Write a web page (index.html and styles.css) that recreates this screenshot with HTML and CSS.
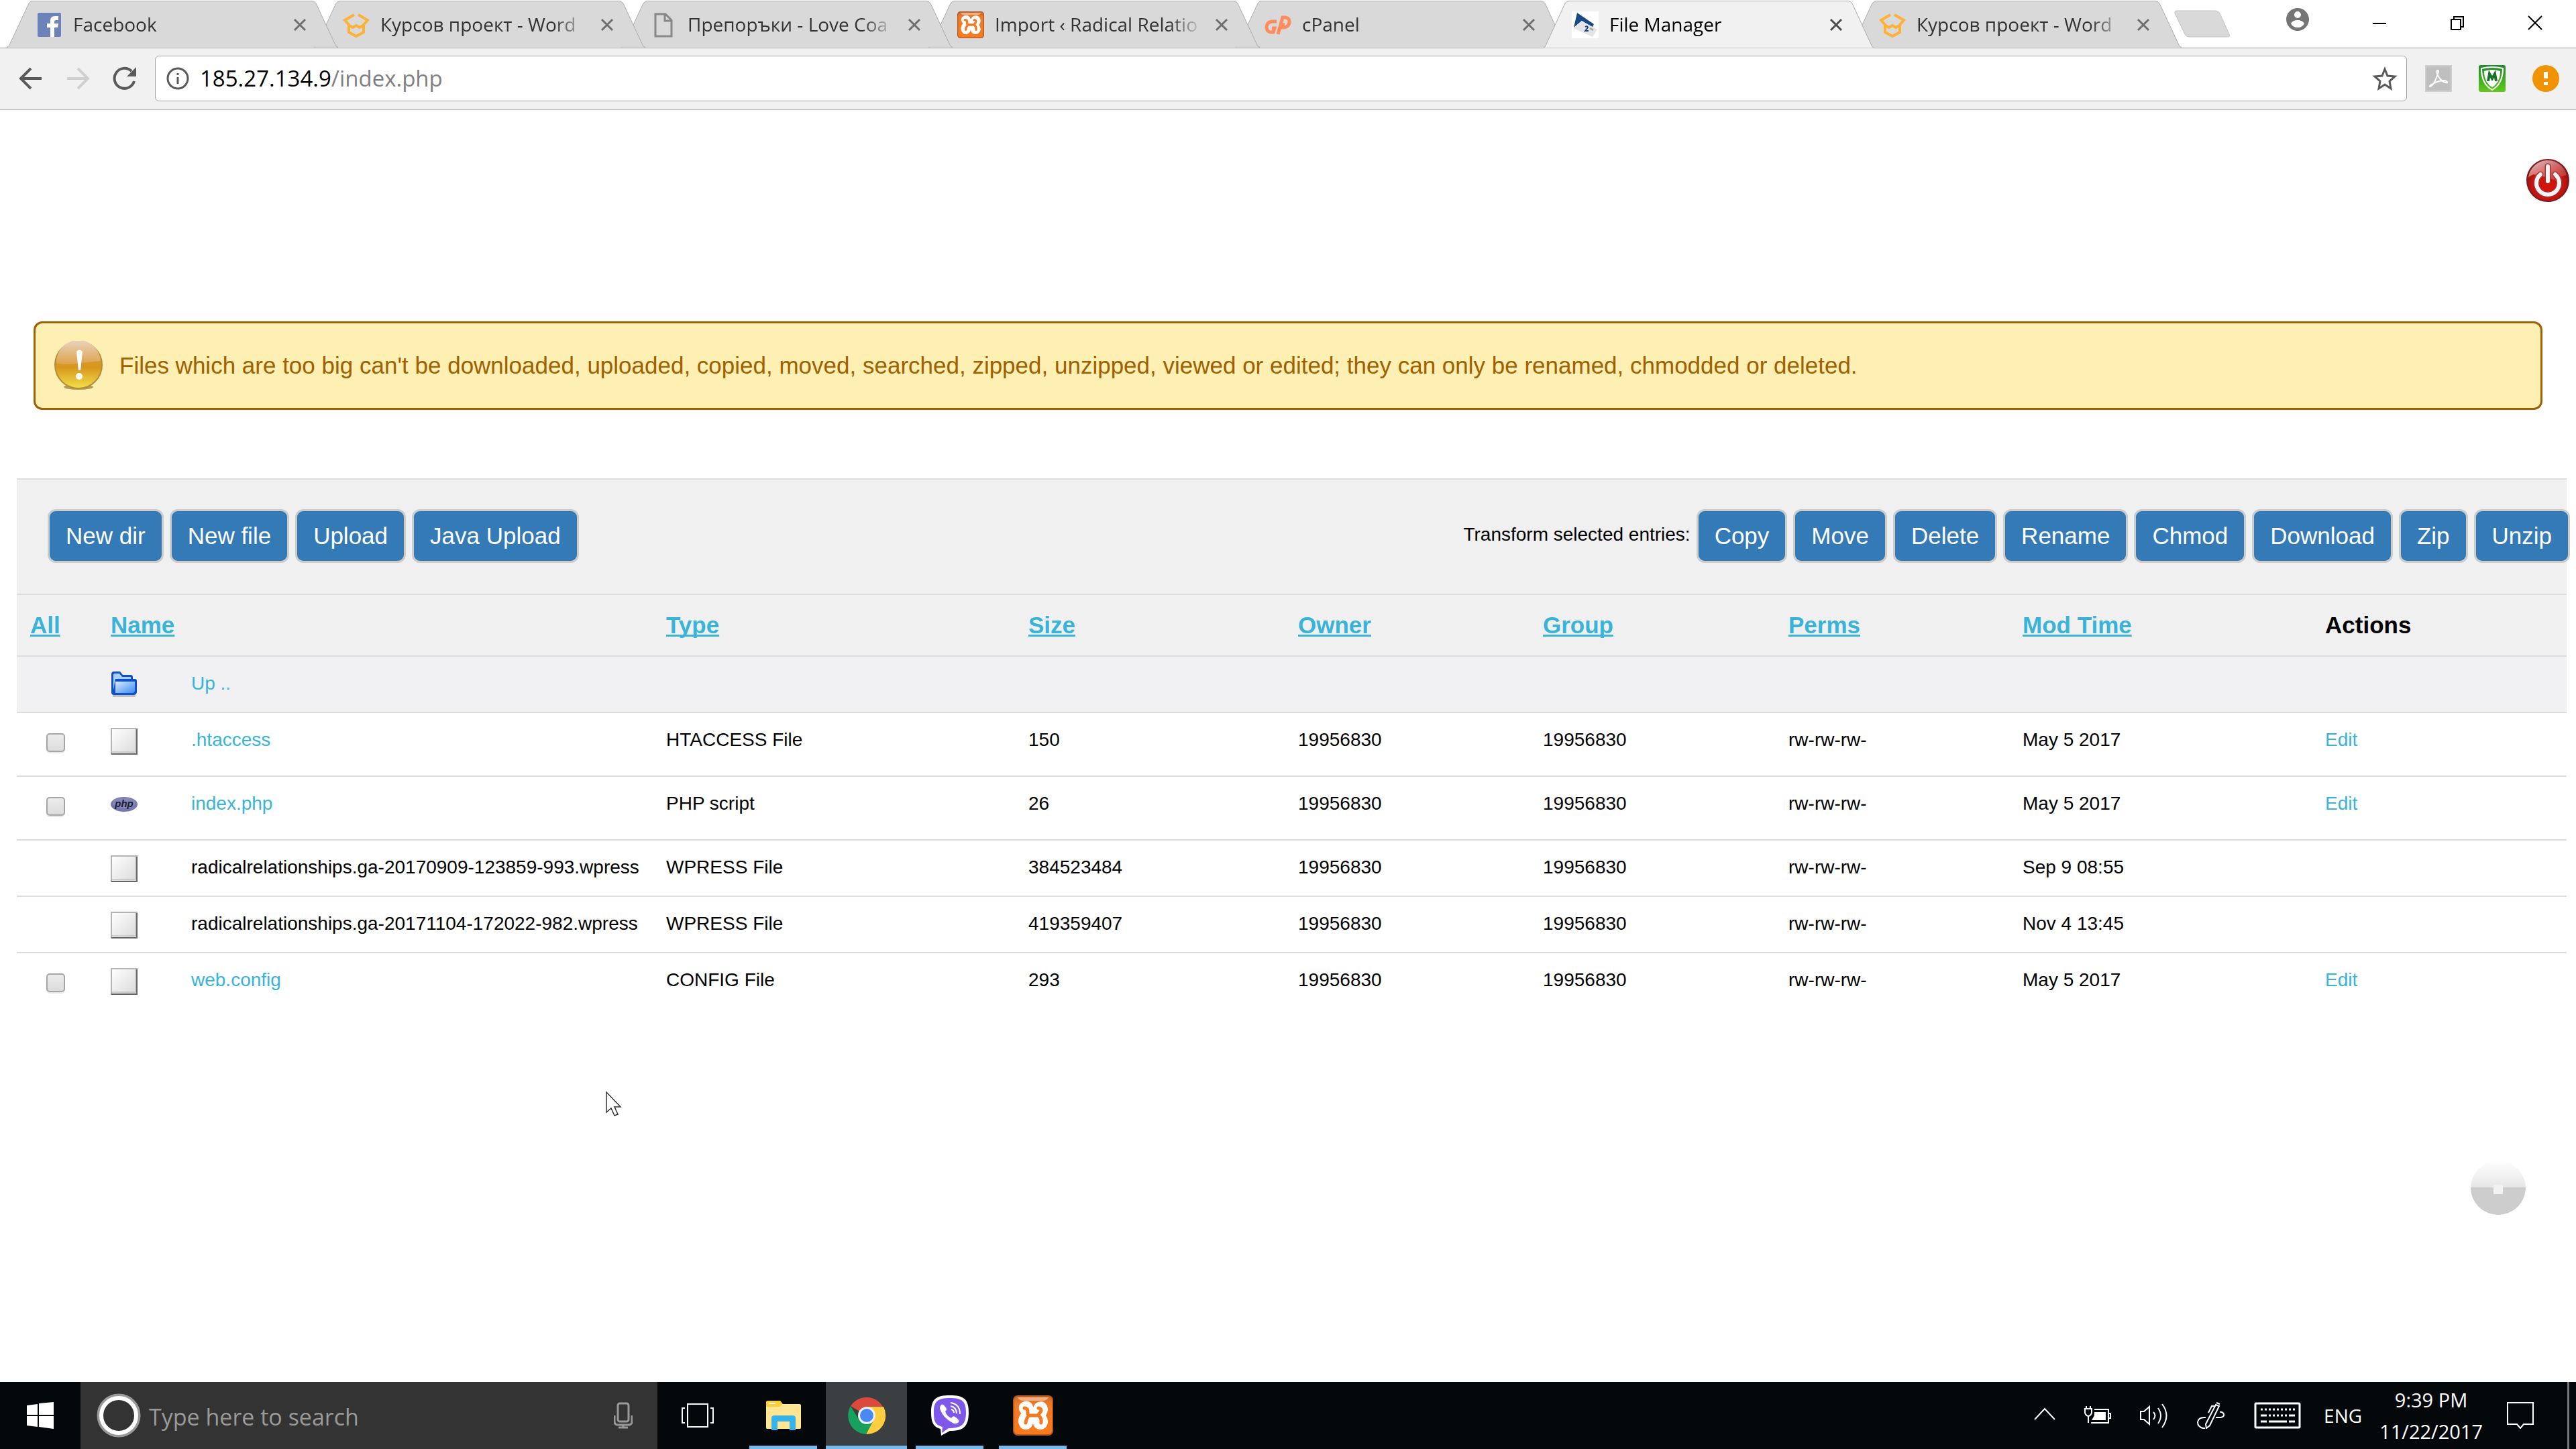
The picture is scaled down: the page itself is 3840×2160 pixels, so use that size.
FILE: index.html
```html
<!DOCTYPE html>
<html lang="en">
<head>
<meta charset="utf-8">
<title>File Manager</title>
<link rel="stylesheet" href="styles.css">
</head>
<body>
<svg class="defs" aria-hidden="true">
  <defs>
    <linearGradient id="paper" x1="0" y1="0" x2="1" y2="1"><stop offset="0" stop-color="#ffffff"/><stop offset="1" stop-color="#dadada"/></linearGradient>
    <linearGradient id="orange" x1="0" y1="0" x2="0" y2="1"><stop offset="0" stop-color="#c9682c"/><stop offset=".2" stop-color="#f07a26"/><stop offset="1" stop-color="#f97a1d"/></linearGradient>
    <linearGradient id="folderBlue" x1="0" y1="0" x2="1" y2="1"><stop offset="0" stop-color="#d5ebff"/><stop offset="1" stop-color="#3f8cf5"/></linearGradient>
    <linearGradient id="gold" x1="0" y1="0" x2="0" y2="1"><stop offset="0" stop-color="#d9a441"/><stop offset=".55" stop-color="#d7961f"/><stop offset="1" stop-color="#f3e04a"/></linearGradient>
    <linearGradient id="goldGloss" x1="0" y1="0" x2="0" y2="1"><stop offset="0" stop-color="#e9d3bd"/><stop offset="1" stop-color="#dea34c"/></linearGradient>
    <linearGradient id="green" x1="0" y1="0" x2="0" y2="1"><stop offset="0" stop-color="#1f8a2c"/><stop offset="1" stop-color="#62c81c"/></linearGradient>
    <radialGradient id="red" cx=".5" cy=".6" r=".55"><stop offset="0" stop-color="#d81408"/><stop offset=".7" stop-color="#c4140e"/><stop offset="1" stop-color="#8d1014"/></radialGradient>
    <linearGradient id="redGloss" x1="0" y1="0" x2="1" y2="1"><stop offset="0" stop-color="#ffffff"/><stop offset="1" stop-color="#d85050" stop-opacity=".5"/></linearGradient>
    <linearGradient id="ghostTop" x1="0" y1="0" x2="0" y2="1"><stop offset="0" stop-color="#ffffff"/><stop offset="1" stop-color="#e6e6e6"/></linearGradient>
  </defs>
  <symbol id="tab-shape" viewBox="0 0 494 72" preserveAspectRatio="none">
    <path d="M0 71.500Q3 71 4 68L33 5Q35 1.500 39 1.500H455Q459 1.500 461 5L490 68Q491 71 494 71.500"/>
  </symbol>
  <symbol id="cross" viewBox="0 0 20 20"><path d="M2 2L18 18M18 2L2 18" fill="none" stroke="currentColor" stroke-width="3"/></symbol>
  <symbol id="book" viewBox="0 0 40 40">
    <g fill="none" stroke="#fdb136" stroke-width="4"><path d="M17 5L3 13L9 20V31L20 37L31 31V20L37 13L23 5"/><path d="M8 20L15 24L20 21L25 24L32 20"/></g>
  </symbol>
  <symbol id="xampp" viewBox="0 0 60 60">
    <rect x="1" y="1" width="58" height="58" rx="6" fill="url(#orange)" stroke="#b45a20" stroke-width="2"/>
    <path d="M7 3H53Q51 8 44 8H16Q9 8 7 3Z" fill="#f3b083"/>
    <g fill="none" stroke-linecap="round" stroke-linejoin="round">
      <path d="M18 23Q13 19 17 16Q22 13 24 19V29H36V22Q37 15 43 16Q48 20 43 27Q40 30 43 33Q48 40 43 44Q36 46 36 38V30H24V38Q23 46 17 44Q12 38 18 30" stroke="#fff" stroke-width="13"/>
      <path d="M17 19Q22 19 22 24V28M38 19Q44 20 41 25L37 30H25Q20 32 19 41M38 30Q43 34 42 41" stroke="#f6791f" stroke-width="5"/>
    </g>
  </symbol>
  <symbol id="file" viewBox="0 0 40 40">
    <rect x="1" y="1" width="38" height="38" fill="url(#paper)" stroke="#b4b4b4" stroke-width="2"/>
    <path d="M39 2V39H1" fill="none" stroke="#666" stroke-width="2"/>
    <path d="M2 36H37V2" fill="none" stroke="#b0b0b0" stroke-width="1"/>
  </symbol>
</svg>

<header class="browser">
  <nav class="tabstrip" aria-label="Tabs">
    <div class="tab">
      <svg class="tab-bg"><use href="#tab-shape"/></svg>
      <svg class="fav" viewBox="0 0 40 40"><rect x="3" y="2" width="35" height="36" rx="2" fill="#6c82b9"/><path d="M22 38V24H17V18H22V14Q22 7 29 7H34V13H31Q28 13 28 16V18H34L33 24H28V38Z" fill="#fff"/></svg>
      <a class="tab-title" href="#">Facebook</a>
      <button class="tab-close" aria-label="Close"><svg><use href="#cross"/></svg></button>
    </div>
    <div class="tab">
      <svg class="tab-bg"><use href="#tab-shape"/></svg>
      <svg class="fav"><use href="#book"/></svg>
      <a class="tab-title" href="#">Курсов проект - Word</a>
      <button class="tab-close" aria-label="Close"><svg><use href="#cross"/></svg></button>
    </div>
    <div class="tab">
      <svg class="tab-bg"><use href="#tab-shape"/></svg>
      <svg class="fav" viewBox="0 0 40 40"><path d="M8 4H23L32 13V37H8ZM22 4V14H32" fill="none" stroke="#888" stroke-width="3"/></svg>
      <a class="tab-title" href="#">Препоръки - Love Coa</a>
      <button class="tab-close" aria-label="Close"><svg><use href="#cross"/></svg></button>
    </div>
    <div class="tab">
      <svg class="tab-bg"><use href="#tab-shape"/></svg>
      <svg class="fav"><use href="#xampp"/></svg>
      <a class="tab-title" href="#">Import ‹ Radical Relatio</a>
      <button class="tab-close" aria-label="Close"><svg><use href="#cross"/></svg></button>
    </div>
    <div class="tab">
      <svg class="tab-bg"><use href="#tab-shape"/></svg>
      <svg class="fav" viewBox="0 0 40 40"><path d="M18 15H11Q4 16 3 23Q3 30 9 31H13L15 25H11M20 34L27 9H31Q38 10 37 17Q35 24 28 24H26L28 17" fill="none" stroke="#ff8c5a" stroke-width="5"/></svg>
      <a class="tab-title" href="#">cPanel</a>
      <button class="tab-close" aria-label="Close"><svg><use href="#cross"/></svg></button>
    </div>
    <div class="tab tab-active">
      <svg class="tab-bg"><use href="#tab-shape"/></svg>
      <svg class="fav" viewBox="0 0 40 40"><path d="M0 0H40V40H0Z" fill="#fff"/><path d="M8 2L33 19L30 25L15 14L3 24Z" fill="#174a86"/><path d="M15 14L38 27L31 38L2 25Z" fill="#e3e5e8"/><path d="M20 23Q23 21 24 24L20 29H25" fill="none" stroke="#23477a" stroke-width="2"/><path d="M27 25L32 28" stroke="#aaa" stroke-width="3"/></svg>
      <a class="tab-title" href="#">File Manager</a>
      <button class="tab-close" aria-label="Close"><svg><use href="#cross"/></svg></button>
    </div>
    <div class="tab">
      <svg class="tab-bg"><use href="#tab-shape"/></svg>
      <svg class="fav"><use href="#book"/></svg>
      <a class="tab-title" href="#">Курсов проект - Word</a>
      <button class="tab-close" aria-label="Close"><svg><use href="#cross"/></svg></button>
    </div>
    <button class="new-tab" aria-label="New tab"><svg viewBox="0 0 84 42"><path d="M3 1H62Q66 1 68 5L82 36Q84 40 80 40H22Q18 40 16 36L1 5Q0 1 3 1Z" fill="#d9d9d9" stroke="#c4c4c4"/></svg></button>
    <div class="window-controls">
      <button class="avatar" aria-label="Profile"><svg viewBox="0 0 34 34"><circle cx="17" cy="17" r="17" fill="#757575"/><circle cx="17" cy="10" r="5" fill="#fff"/><path d="M7 23Q10 18 17 18T27 23Q24 29 17 29T7 23Z" fill="#fff"/></svg></button>
      <button aria-label="Minimize"><svg viewBox="0 0 22 22"><path d="M1 12H21" stroke="#000" stroke-width="2"/></svg></button>
      <button aria-label="Restore"><svg viewBox="0 0 22 22"><path d="M2 6H16V21H2ZM6 6V2H20V17H16" fill="none" stroke="#000" stroke-width="2"/></svg></button>
      <button aria-label="Close window"><svg viewBox="0 0 22 22"><path d="M1 1L21 21M21 1L1 21" stroke="#000" stroke-width="2"/></svg></button>
    </div>
  </nav>
  <div class="toolbar">
    <button aria-label="Back"><svg viewBox="0 0 36 36"><path d="M34 18H4M18 3L3 18L18 33" fill="none" stroke="#5a5a5a" stroke-width="4"/></svg></button>
    <button aria-label="Forward"><svg viewBox="0 0 36 36"><path d="M2 18H32M18 3L33 18L18 33" fill="none" stroke="#d0d0d0" stroke-width="4"/></svg></button>
    <button aria-label="Reload"><svg viewBox="0 0 36 36"><path d="M32 22A15 15 0 1 1 28 7" fill="none" stroke="#5a5a5a" stroke-width="4"/><path d="M35 1V15H21Z" fill="#5a5a5a"/></svg></button>
    <div class="omnibox">
      <svg class="info" viewBox="0 0 34 34"><circle cx="17" cy="17" r="15" fill="none" stroke="#5a5a5a" stroke-width="3"/><path d="M17 15V25M17 9V12" stroke="#5a5a5a" stroke-width="3"/></svg>
      <div class="url" role="textbox" aria-label="Address">185.27.134.9<span>/index.php</span></div>
      <button class="star" aria-label="Bookmark"><svg viewBox="0 0 38 36"><path d="M19 4L23 14L34 15L26 22L28 33L19 27L10 33L12 22L4 15L15 14Z" fill="none" stroke="#5a5a5a" stroke-width="3"/></svg></button>
    </div>
    <div class="extensions">
      <button aria-label="Acrobat"><svg viewBox="0 0 40 40"><rect x="1" y="1" width="38" height="38" fill="#bfbfbf" stroke="#d0d0d0" stroke-width="2"/><path d="M7 32Q13 32 20 10Q20 7 18 8Q16 12 22 20Q28 27 33 26Q33 23 27 23Q17 24 10 29Q6 31 7 32Z" fill="none" stroke="#fff" stroke-width="2"/></svg></button>
      <button aria-label="WebAdvisor"><svg viewBox="0 0 40 40"><rect width="40" height="40" rx="3" fill="url(#green)"/><path d="M4 5Q20 1 36 5Q36 28 20 37Q4 28 4 5Z" fill="none" stroke="#fff" stroke-width="2"/><path d="M8 9Q20 5 32 9Q32 26 20 33Q8 26 8 9Z" fill="#fff"/><path d="M14 24L16 13L20 20L24 13L26 24" fill="none" stroke="#18722a" stroke-width="4"/></svg></button>
      <button aria-label="Update available"><svg viewBox="0 0 40 40"><circle cx="20" cy="20" r="20" fill="#f09300"/><path d="M20 10V20M20 25V30" stroke="#fff" stroke-width="6"/></svg></button>
    </div>
  </div>
</header>

<main class="page">
  <div class="session">
    <button class="logout" aria-label="Log out"><svg viewBox="0 0 66 66"><circle cx="33" cy="33" r="31" fill="url(#red)" stroke="#7c1a20" stroke-width="2"/><path d="M4 29A29 29 0 0 1 61 25Q50 27 42 32Q24 26 12 24Q6 26 4 29Z" fill="url(#redGloss)" opacity=".8"/><path d="M22 24A17 17 0 1 0 44 24" fill="none" stroke="#a83238" stroke-width="9" stroke-linecap="round"/><path d="M33 12V34" stroke="#a83238" stroke-width="9" stroke-linecap="round"/><path d="M22 24A17 17 0 1 0 44 24M33 12V34" fill="none" stroke="#f4f4f4" stroke-width="6" stroke-linecap="round"/></svg></button>
  </div>

  <div class="notice" role="alert">
    <svg class="notice-icon" viewBox="0 0 74 74"><ellipse cx="37" cy="69" rx="22" ry="4" fill="#b29b52"/><circle cx="37" cy="36" r="35" fill="url(#gold)" stroke="#b08d3c" stroke-width="2"/><path d="M4 34A33 33 0 0 1 70 30Q50 32 37 34T4 34Z" fill="url(#goldGloss)"/><path d="M34 16Q38 11 43 16L40 44H37Z" fill="#fff"/><circle cx="38" cy="53" r="5" fill="#fff"/></svg>
    <p>Files which are too big can't be downloaded, uploaded, copied, moved, searched, zipped, unzipped, viewed or edited; they can only be renamed, chmodded or deleted.</p>
  </div>

  <form class="files">
    <div class="actions">
      <div class="group">
        <button type="button" class="btn">New dir</button>
        <button type="button" class="btn">New file</button>
        <button type="button" class="btn">Upload</button>
        <button type="button" class="btn">Java Upload</button>
      </div>
      <div class="group group-transform">
        <span class="group-label">Transform selected entries:</span>
        <button type="button" class="btn">Copy</button>
        <button type="button" class="btn">Move</button>
        <button type="button" class="btn">Delete</button>
        <button type="button" class="btn">Rename</button>
        <button type="button" class="btn">Chmod</button>
        <button type="button" class="btn">Download</button>
        <button type="button" class="btn">Zip</button>
        <button type="button" class="btn">Unzip</button>
      </div>
    </div>
    <table class="listing">
      <colgroup><col class="c-check"><col class="c-icon"><col class="c-name"><col class="c-type"><col class="c-size"><col class="c-owner"><col class="c-group"><col class="c-perms"><col class="c-time"><col></colgroup>
      <thead>
        <tr><th><a href="#">All</a></th><th colspan="2"><a href="#">Name</a></th><th><a href="#">Type</a></th><th><a href="#">Size</a></th><th><a href="#">Owner</a></th><th><a href="#">Group</a></th><th><a href="#">Perms</a></th><th><a href="#">Mod Time</a></th><th>Actions</th></tr>
      </thead>
      <tbody>
        <tr class="up"><td></td><td><svg class="ficon" viewBox="0 0 40 40"><path d="M3 34H37V38H3Z" fill="#777" opacity=".4"/><path d="M1 4Q1 0 5 0H14L18 5H30Q33 5 33 9V11H36Q39 11 39 14V31Q38 35 34 35H5Q1 35 1 31Z" fill="#0f4fc8"/><path d="M4 5Q4 3 6 3H13L17 8H30V11H7L4 28Z" fill="#a9d2ff"/><path d="M7 15H36V28Q36 32 33 32H7Z" fill="url(#folderBlue)"/></svg></td><td><a href="#">Up ..</a></td><td></td><td></td><td></td><td></td><td></td><td></td><td></td></tr>
        <tr class="selectable"><td><input type="checkbox" aria-label="Select .htaccess"></td><td><svg class="ficon"><use href="#file"/></svg></td><td><a href="#">.htaccess</a></td><td>HTACCESS File</td><td>150</td><td>19956830</td><td>19956830</td><td>rw-rw-rw-</td><td>May 5 2017</td><td><a href="#">Edit</a></td></tr>
        <tr class="selectable"><td><input type="checkbox" aria-label="Select index.php"></td><td><svg class="ficon" viewBox="0 0 40 40"><ellipse cx="20" cy="19" rx="20" ry="11" fill="#7377ad"/><ellipse cx="20" cy="17" rx="17" ry="8" fill="#8487b8"/><text x="20" y="23" text-anchor="middle" class="php">php</text></svg></td><td><a href="#">index.php</a></td><td>PHP script</td><td>26</td><td>19956830</td><td>19956830</td><td>rw-rw-rw-</td><td>May 5 2017</td><td><a href="#">Edit</a></td></tr>
        <tr><td></td><td><svg class="ficon"><use href="#file"/></svg></td><td>radicalrelationships.ga-20170909-123859-993.wpress</td><td>WPRESS File</td><td>384523484</td><td>19956830</td><td>19956830</td><td>rw-rw-rw-</td><td>Sep 9 08:55</td><td></td></tr>
        <tr><td></td><td><svg class="ficon"><use href="#file"/></svg></td><td>radicalrelationships.ga-20171104-172022-982.wpress</td><td>WPRESS File</td><td>419359407</td><td>19956830</td><td>19956830</td><td>rw-rw-rw-</td><td>Nov 4 13:45</td><td></td></tr>
        <tr class="selectable"><td><input type="checkbox" aria-label="Select web.config"></td><td><svg class="ficon"><use href="#file"/></svg></td><td><a href="#">web.config</a></td><td>CONFIG File</td><td>293</td><td>19956830</td><td>19956830</td><td>rw-rw-rw-</td><td>May 5 2017</td><td><a href="#">Edit</a></td></tr>
      </tbody>
    </table>
  </form>

  <button class="to-top" aria-label="Back to top"><svg viewBox="0 0 82 82"><path d="M0 41A41 41 0 0 1 82 41Z" fill="url(#ghostTop)"/><path d="M0 40A41 41 0 0 0 82 40Z" fill="#cdcdcd"/><path d="M34 36H48V50H34Z" fill="#f2f2f2"/></svg></button>
  <svg class="pointer" viewBox="0 0 26 40"><path d="M2 2V32L9 26L14 37L19 35L14 24H23Z" fill="#fff" stroke="#333" stroke-width="1.500"/></svg>
</main>

<footer class="taskbar">
  <button class="start" aria-label="Start"><svg viewBox="0 0 40 40"><path d="M0 5L16 3V19H0ZM18 2L40 0V19H18ZM0 21H16V37L0 35ZM18 21H40V40L18 37Z" fill="#fff"/></svg></button>
  <label class="search">
    <svg class="cortana" viewBox="0 0 66 66"><circle cx="33" cy="33" r="30" fill="none" stroke="#999" stroke-width="5"/><circle cx="33" cy="33" r="26" fill="none" stroke="#fff" stroke-width="6"/></svg>
    <input type="text" placeholder="Type here to search">
    <svg class="mic" viewBox="0 0 28 40"><g fill="none" stroke="#9a9a9a" stroke-width="3"><rect x="6" y="2" width="16" height="27" rx="3"/><path d="M1 20V29Q1 34 6 34H22Q27 34 27 29V20M14 34V39M7 38H21"/></g></svg>
  </label>
  <button class="task-view" aria-label="Task view"><svg viewBox="0 0 48 36"><path d="M9 1H39V35H9ZM5 7H1V29H5M43 7H47V29H43" fill="none" stroke="#fff" stroke-width="2"/></svg></button>
  <div class="apps">
    <button class="app" aria-label="File Explorer"><svg viewBox="0 0 60 60"><path d="M4 10Q4 8 6 8H25L29 13V20H4Z" fill="#ffcf35"/><path d="M4 17H24L28 13H54Q56 13 56 15V48Q56 50 54 50H6Q4 50 4 48Z" fill="#ffe694"/><path d="M8 11H18V13H8Z" fill="#fff"/><path d="M12 52V34Q12 30 16 30H44Q48 30 48 34V52H39V39H21V52Z" fill="#38b3ea"/></svg></button>
    <button class="app app-active" aria-label="Google Chrome"><svg viewBox="0 0 60 60"><path d="M30 30L6 16A28 28 0 0 1 54 17H30Z" fill="#dc4a3e"/><path d="M30 17H55A28 28 0 0 1 29 58L40 36Z" fill="#ffcd40"/><path d="M6 16L19 37Q30 48 41 36L29 58A28 28 0 0 1 6 16Z" fill="#18a05e"/><circle cx="30" cy="30" r="13" fill="#f1f1f1"/><circle cx="30" cy="30" r="10" fill="#4a89f3"/></svg></button>
    <button class="app" aria-label="Viber"><svg viewBox="0 0 60 60"><path d="M30 0C50 0 58 5 58 25C58 47 50 53 30 53L17 60L16 50C5 47 2 40 2 25C2 5 10 0 30 0Z" fill="#fff"/><path d="M30 4C48 4 54 9 54 25C54 43 48 49 28 49L18 56L19 47C8 44 6 39 6 25C6 9 12 4 30 4Z" fill="#7d58ea"/><path d="M17 14Q20 12 23 17Q27 21 23 24Q25 31 32 34Q35 29 39 33Q45 37 43 40Q39 44 34 41Q20 34 15 20Q15 16 17 14Z" fill="#fff"/><path d="M31 11Q45 13 45 28M31 16Q40 18 40 27M32 21Q36 22 36 26" fill="none" stroke="#fff" stroke-width="2"/></svg></button>
    <button class="app" aria-label="XAMPP"><svg><use href="#xampp"/></svg></button>
  </div>
  <div class="tray">
    <button aria-label="Show hidden icons"><svg class="w32" viewBox="0 0 32 40"><path d="M1 26L16 10L31 26" fill="none" stroke="#fff" stroke-width="2"/></svg></button>
    <button aria-label="Battery"><svg class="w40" viewBox="0 0 40 40"><path d="M15 11H36V31H10M36 17H39V24H36M3 6V10M9 6V10M6 21V31" fill="none" stroke="#fff" stroke-width="2"/><path d="M15 15H32V27H11L15 20Z" fill="#fff"/><path d="M1 10H11V16Q10 20 6 21Q2 20 1 16Z" fill="none" stroke="#fff" stroke-width="2"/></svg></button>
    <button aria-label="Volume"><svg class="w42" viewBox="0 0 42 40"><path d="M1 14H6L14 7V33L6 26H1ZM20 15Q25 20 20 26M27 9Q35 20 27 32M33 3Q46 20 33 38" fill="none" stroke="#fff" stroke-width="2"/></svg></button>
    <button aria-label="Windows Ink"><svg class="w42" viewBox="0 0 42 40"><path d="M12 39H9Q1 37 1 30Q2 22 13 23M28 23H35Q41 22 40 18Q38 14 34 15M28 4L33 6L19 35L14 39L13 33ZM29 1L34 3M27 6L22 6L17 16" fill="none" stroke="#fff" stroke-width="2"/></svg></button>
    <button class="keyboard" aria-label="Touch keyboard"><svg class="w70" viewBox="0 0 70 40"><rect x="2" y="2" width="66" height="36" rx="1" fill="none" stroke="#fff" stroke-width="3"/><path d="M10 11H61M22 20H49" stroke="#fff" stroke-width="3" stroke-dasharray="3 3"/><path d="M10 20H19M52 20H61M10 29H19M22 29H49M52 29H61" stroke="#fff" stroke-width="3"/></svg></button>
    <button class="lang">ENG</button>
    <button class="clock"><span>9:39 PM</span><span>11/22/2017</span></button>
    <button class="notifications" aria-label="Notifications"><svg class="w40" viewBox="0 0 40 40"><path d="M1 1H39V33H25L20 39L15 33H1Z" fill="none" stroke="#fff" stroke-width="2"/></svg></button>
    <button class="desktop-peek" aria-label="Show desktop"></button>
  </div>
</footer>
</body>
</html>
```
FILE: styles.css
```css
* { box-sizing: border-box; }

body {
  margin: 0;
  min-height: 100vh;
  display: flex;
  flex-direction: column;
  background: #fff;
  color: #000;
  font-family: "Liberation Sans", Arial, sans-serif;
  font-size: 28px;
  line-height: 40px;
}

button {
  margin: 0;
  padding: 0;
  border: 0;
  background: none;
  color: inherit;
  font: inherit;
  flex: none;
}

svg { display: block; }
.defs { position: absolute; width: 0; height: 0; }

/* Browser chrome */
.browser { font-family: "Open Sans", "Noto Sans", sans-serif; }

.tabstrip {
  display: flex;
  align-items: center;
  height: 72px;
  padding-left: 10px;
  border-bottom: 1px solid #9c9c9c;
}

.tab {
  position: relative;
  display: flex;
  align-items: center;
  flex: none;
  width: 494px;
  height: 72px;
  margin: 0 -36px -1px 0;
  padding: 2px 47px 0 43px;
}
.tab:nth-child(1) { z-index: 7; }
.tab:nth-child(2) { z-index: 6; }
.tab:nth-child(3) { z-index: 5; }
.tab:nth-child(4) { z-index: 4; }
.tab:nth-child(5) { z-index: 3; }
.tab:nth-child(7) { z-index: 1; }
.tab.tab-active { z-index: 8; }

.tab-bg {
  position: absolute;
  inset: 0;
  width: 100%;
  height: 100%;
  z-index: -1;
  fill: #d9d9d9;
  stroke: #ababab;
}
.tab-active .tab-bg { fill: #f1f1f1; }
.tab:not(.tab-active) { border-bottom: 1px solid #9c9c9c; }

.fav { width: 40px; height: 40px; flex: none; }

.tab-title {
  flex: 1;
  min-width: 0;
  margin: 0 18px 0 16px;
  padding-bottom: 2px;
  white-space: nowrap;
  color: #333;
  text-decoration: none;
  font-size: 28px;
  -webkit-mask-image: linear-gradient(to left, transparent, #000 50px);
  mask-image: linear-gradient(to left, transparent, #000 50px);
}
.tab-active .tab-title { color: #000; }
.tab-close { color: #6e6e6e; }
.tab-close svg { width: 20px; height: 20px; }
.tab-active .tab-close { color: #4c4c4c; }

.new-tab { margin-left: 25px; }
.new-tab svg { width: 84px; height: 42px; }

.window-controls {
  display: flex;
  align-items: center;
  gap: 94px;
  margin-left: auto;
  padding: 0 50px 4px 0;
}
.window-controls svg { width: 22px; height: 22px; }
.window-controls .avatar svg { width: 34px; height: 34px; }
.window-controls .avatar { padding-bottom: 10px; }

.toolbar {
  display: flex;
  align-items: center;
  gap: 34px;
  height: 92px;
  padding: 0 25px 2px 28px;
  background: #f1f1f1;
  border-bottom: 1px solid #b4b4b4;
}
.toolbar > button svg { width: 36px; height: 36px; }

.omnibox {
  flex: 1;
  display: flex;
  align-items: center;
  gap: 16px;
  height: 68px;
  margin-left: -7px;
  padding: 0 13px 0 16px;
  background: #fff;
  border: 1px solid #a3a3a3;
  border-radius: 6px;
}
.info { width: 34px; height: 34px; flex: none; }
.url { flex: 1; font-size: 33px; }
.url span { color: #808080; }
.star svg { width: 38px; height: 36px; }

.extensions { display: flex; gap: 40px; margin-left: -7px; }
.extensions svg { width: 40px; height: 40px; }

/* Page */
.page { position: relative; flex: 1; }

.session { display: flex; justify-content: flex-end; padding: 72px 9px 0; }
.logout svg { width: 66px; height: 66px; }

.notice {
  display: flex;
  align-items: center;
  gap: 24px;
  min-height: 132px;
  margin: 177px 50px 0;
  padding: 6px 27px;
  border: 3px solid #9f6000;
  border-radius: 13px;
  background: #feefb3;
  color: #9f6000;
  font-size: 35px;
  line-height: 50px;
}
.notice p { margin: 0; }
.notice-icon { width: 74px; height: 74px; flex: none; }

.files { margin: 102px 14px 0 25px; }

.actions {
  display: flex;
  justify-content: space-between;
  align-items: center;
  height: 172px;
  padding: 0 0 2px 46px;
  background: #f0f0f0;
  border-top: 2px solid #ddd;
}
.group { display: flex; align-items: center; gap: 9px; }
.group-transform { margin-right: -5px; }
.group-label { padding-bottom: 4px; }

.btn {
  height: 80px;
  padding: 0 24px;
  border: 3px solid #ccc;
  border-radius: 12px;
  background: #337ab7;
  color: #fff;
  font-size: 35px;
  line-height: 40px;
  white-space: nowrap;
}

.listing {
  width: 100%;
  table-layout: fixed;
  border-collapse: collapse;
}
.c-check, .c-icon { width: 120px; }
.c-name { width: 708px; }
.c-type { width: 540px; }
.c-size { width: 402px; }
.c-owner { width: 365px; }
.c-group { width: 366px; }
.c-perms { width: 349px; }
.c-time { width: 451px; }

.listing th, .listing td {
  padding: 20px 0 0 20px;
  border-top: 2px solid #ddd;
  text-align: left;
  vertical-align: top;
  white-space: nowrap;
}
.listing a { color: #39b3d7; text-decoration: none; }

.listing thead { background: #f0f0f0; font-size: 35px; line-height: 50px; }
.listing thead tr { height: 92px; }
.listing thead a { text-decoration: underline; text-decoration-thickness: 3px; text-decoration-skip-ink: none; }

.listing tbody tr { height: 84px; }
.listing tbody tr.selectable { height: 95px; }
.listing tbody tr.up { background: #f1f1f4; }

.ficon { width: 40px; height: 40px; margin-top: 2px; }
.php { font: italic bold 15px "Liberation Sans", sans-serif; fill: #1c1c33; }

.listing input {
  appearance: none;
  display: block;
  width: 28px;
  height: 28px;
  margin: 10px 0 0 24px;
  border: 2px solid #a6a6a6;
  border-radius: 5px;
  background: linear-gradient(#ececec, #dcdcdc);
  box-shadow: 0 2px 1px #e6e6e6;
}

.to-top { position: absolute; right: 75px; bottom: 248px; }
.to-top svg { width: 82px; height: 82px; }
.pointer { position: absolute; left: 902px; top: 1462px; width: 26px; height: 40px; }

/* Taskbar */
.taskbar {
  display: flex;
  align-items: stretch;
  height: 100px;
  background: #04080b;
  color: #fff;
  font-family: "Open Sans", "Noto Sans", sans-serif;
}
.start { width: 120px; display: grid; place-items: center; }
.start svg { width: 40px; height: 40px; }

.search {
  display: flex;
  align-items: center;
  width: 860px;
  padding: 0 37px 0 24px;
  background: #333;
}
.cortana { width: 66px; height: 66px; flex: none; }
.search input {
  flex: 1;
  min-width: 0;
  margin: 0;
  padding: 4px 0 0 12px;
  border: 0;
  background: none;
  color: #fff;
  font: 34px/50px "Open Sans", "Noto Sans", sans-serif;
}
.search input::placeholder { color: #9a9a9a; opacity: 1; }
.mic { width: 28px; height: 40px; flex: none; }

.task-view { width: 120px; display: grid; place-items: center; }
.task-view svg { width: 48px; height: 36px; }

.apps { display: flex; gap: 23px; padding-left: 17px; }
.app {
  position: relative;
  width: 101px;
  display: grid;
  place-items: center;
  border-bottom: 5px solid #76b9ed;
  padding-top: 5px;
}
.app svg { width: 60px; height: 60px; }
.app-active { width: 121px; margin: 0 -10px; background: #3b3f42; }

.tray { display: flex; align-items: center; margin-left: auto; }
.tray svg { height: 40px; }
.tray button { margin-right: 43px; }
.w32 { width: 32px; }
.w40 { width: 40px; }
.w42 { width: 42px; }
.w70 { width: 70px; }
.tray button.keyboard { margin-right: 34px; }
.tray button.lang { font-size: 28px; margin-right: 26px; }
.tray button.clock {
  display: flex;
  flex-direction: column;
  align-items: center;
  font-size: 29px;
  line-height: 47px;
  margin-right: 36px;
}
.tray button.notifications { margin-right: 50px; }
.tray button.desktop-peek { align-self: stretch; width: 13px; margin: 0; border-left: 3px solid #777; }
```
